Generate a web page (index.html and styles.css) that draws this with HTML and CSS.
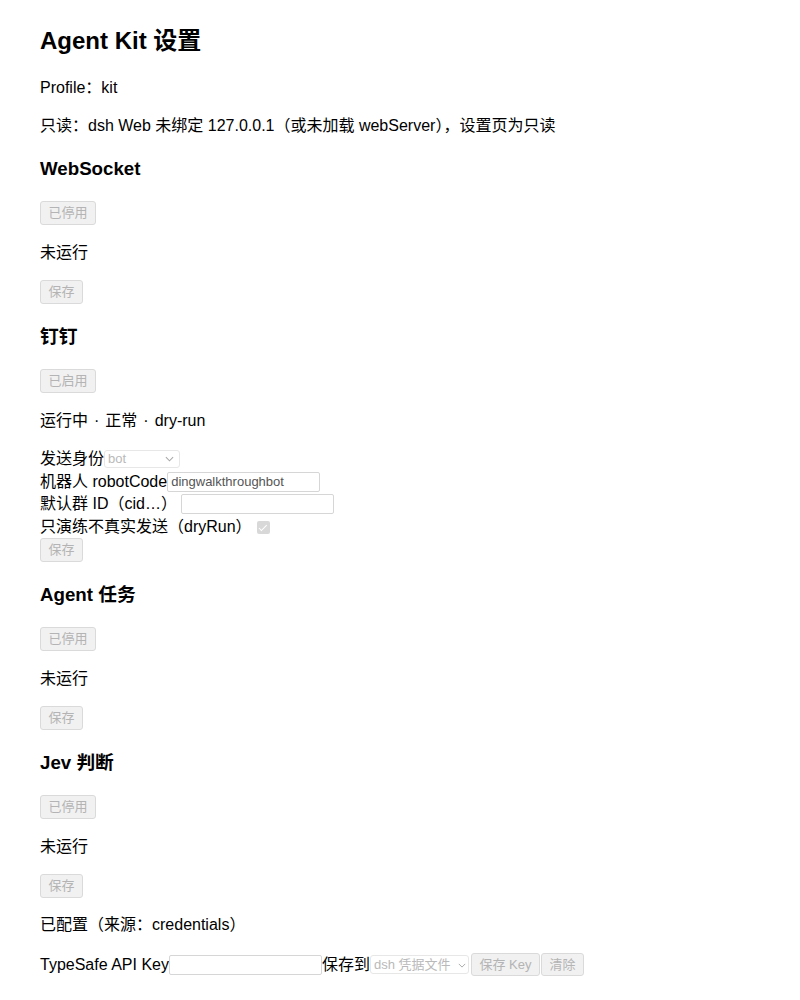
FILE: index.html
```html
<!DOCTYPE html>
<html lang="zh-CN">
<head>
<meta charset="utf-8">
<title>Agent Kit 设置</title>
<link rel="stylesheet" href="styles.css">
</head>
<body>
<main class="page">
  <h1 class="title">Agent Kit 设置</h1>
  <p class="text">Profile：kit</p>
  <p class="text">只读：dsh Web 未绑定 127.0.0.1（或未加载 webServer），设置页为只读</p>

  <section class="section">
    <h2 class="heading">WebSocket</h2>
    <div class="btn-row"><button class="btn" disabled>已停用</button></div>
    <p class="text">未运行</p>
    <div class="btn-row"><button class="btn" disabled>保存</button></div>
  </section>

  <section class="section">
    <h2 class="heading">钉钉</h2>
    <div class="btn-row"><button class="btn" disabled>已启用</button></div>
    <p class="text">运行中<span class="sep">·</span>正常<span class="sep">·</span>dry-run</p>
    <div class="form">
      <label class="field">发送身份<span class="select-wrap select-bot"><select class="select" disabled><option>bot</option></select><svg class="chev" viewBox="0 0 10 6" width="9" height="6"><path d="M1 1l4 4 4-4" fill="none" stroke="#a8a8a8" stroke-width="1.2"/></svg></span></label>
      <label class="field">机器人 robotCode<input class="input" type="text" value="dingwalkthroughbot" disabled></label>
      <label class="field">默认群 ID（cid…）<input class="input input-gap" type="text" disabled></label>
      <label class="field">只演练不真实发送（dryRun）<input class="check" type="checkbox" checked disabled></label>
      <div class="btn-row btn-row-tight"><button class="btn" disabled>保存</button></div>
    </div>
  </section>

  <section class="section">
    <h2 class="heading">Agent 任务</h2>
    <div class="btn-row"><button class="btn" disabled>已停用</button></div>
    <p class="text">未运行</p>
    <div class="btn-row"><button class="btn" disabled>保存</button></div>
  </section>

  <section class="section">
    <h2 class="heading">Jev 判断</h2>
    <div class="btn-row"><button class="btn" disabled>已停用</button></div>
    <p class="text">未运行</p>
    <div class="btn-row btn-row-short"><button class="btn" disabled>保存</button></div>
    <p class="text">已配置（来源：credentials）</p>
    <div class="key-row">
      <label class="key-label">TypeSafe API Key<input class="input" type="password" disabled></label>
      <span class="key-label">保存到</span>
      <span class="select-wrap select-store"><select class="select" disabled><option>dsh 凭据文件</option></select><svg class="chev" viewBox="0 0 10 6" width="8" height="5"><path d="M1 1l4 4 4-4" fill="none" stroke="#a8a8a8" stroke-width="1.2"/></svg></span>
      <button class="btn btn-key" disabled>保存 Key</button>
      <button class="btn btn-clear" disabled>清除</button>
    </div>
  </section>
</main>
</body>
</html>
```

FILE: styles.css
```css
html, body {
  margin: 0;
  padding: 0;
  background: #ffffff;
}

body {
  font-family: "Liberation Sans", "Noto Sans CJK SC", sans-serif;
  font-size: 16px;
  line-height: 22px;
  color: #000000;
}

.page {
  padding: 1px 40px 0;
}

.title {
  font-size: 24px;
  line-height: 32px;
  font-weight: 700;
  margin: 24px 0 20px;
}

.text {
  margin: 16px 0;
}

.sep {
  margin: 0 6px;
}

.heading {
  font-size: 18.72px;
  line-height: 26px;
  font-weight: 700;
  margin: 19px 0;
}

.btn-row {
  display: flex;
  align-items: flex-start;
  height: 25px;
  margin: 16px 0;
}

.btn-row-tight {
  margin: 0;
}

.btn-row-short {
  height: 24px;
}

.btn {
  box-sizing: border-box;
  height: 24px;
  padding: 0 7.5px;
  font-family: "Liberation Sans", "Noto Sans CJK SC", sans-serif;
  font-size: 13px;
  font-weight: 400;
  line-height: 22px;
  color: #b4b4b4;
  background: #f1f1f1;
  border: 1px solid #dadada;
  border-radius: 3px;
}

.form {
  margin: 16px 0;
}

.field {
  display: flex;
  align-items: center;
  height: 22.5px;
  white-space: pre;
}

.select-wrap {
  position: relative;
  display: inline-flex;
  align-items: center;
}

.select {
  appearance: none;
  -webkit-appearance: none;
  box-sizing: border-box;
  margin: 0;
  padding: 0 16px 0 3px;
  font-family: "Liberation Sans", "Noto Sans CJK SC", sans-serif;
  font-size: 13px;
  color: #9c9c9c;
  background: #ffffff;
  border: 1px solid #dedede;
  border-radius: 3px;
}

.select-bot .select {
  width: 76px;
  height: 18px;
  line-height: 16px;
}

.select-store .select {
  width: 99px;
  height: 19px;
  line-height: 17px;
  padding-right: 14px;
}

.chev {
  position: absolute;
  right: 6px;
  top: 50%;
  margin-top: -3px;
  pointer-events: none;
}

.select-store .chev {
  right: 3px;
  margin-top: -2px;
}

.input {
  box-sizing: border-box;
  width: 153px;
  height: 20px;
  margin: 0;
  padding: 0 3px;
  font-family: "Liberation Sans", "Noto Sans CJK SC", sans-serif;
  font-size: 13px;
  color: #555555;
  background: #ffffff;
  border: 1px solid #d6d6d6;
  border-radius: 2px;
}

.input-gap {
  margin-left: 4px;
}

.check {
  appearance: none;
  -webkit-appearance: none;
  position: relative;
  width: 13px;
  height: 13px;
  margin: 2px 0 0 5px;
  background: #d8d8d8;
  border-radius: 2px;
}

.check::after {
  content: "";
  position: absolute;
  left: 4.5px;
  top: 1.5px;
  width: 3px;
  height: 6.5px;
  border: solid #ffffff;
  border-width: 0 1.5px 1.5px 0;
  transform: rotate(45deg);
}

.key-row {
  display: flex;
  align-items: center;
  height: 25px;
  margin: 16px 0;
}

.key-label {
  display: inline-flex;
  align-items: center;
}

.btn-key {
  height: 23px;
  margin-left: 2px;
}

.btn-clear {
  height: 23px;
  margin-left: 1px;
}
```
